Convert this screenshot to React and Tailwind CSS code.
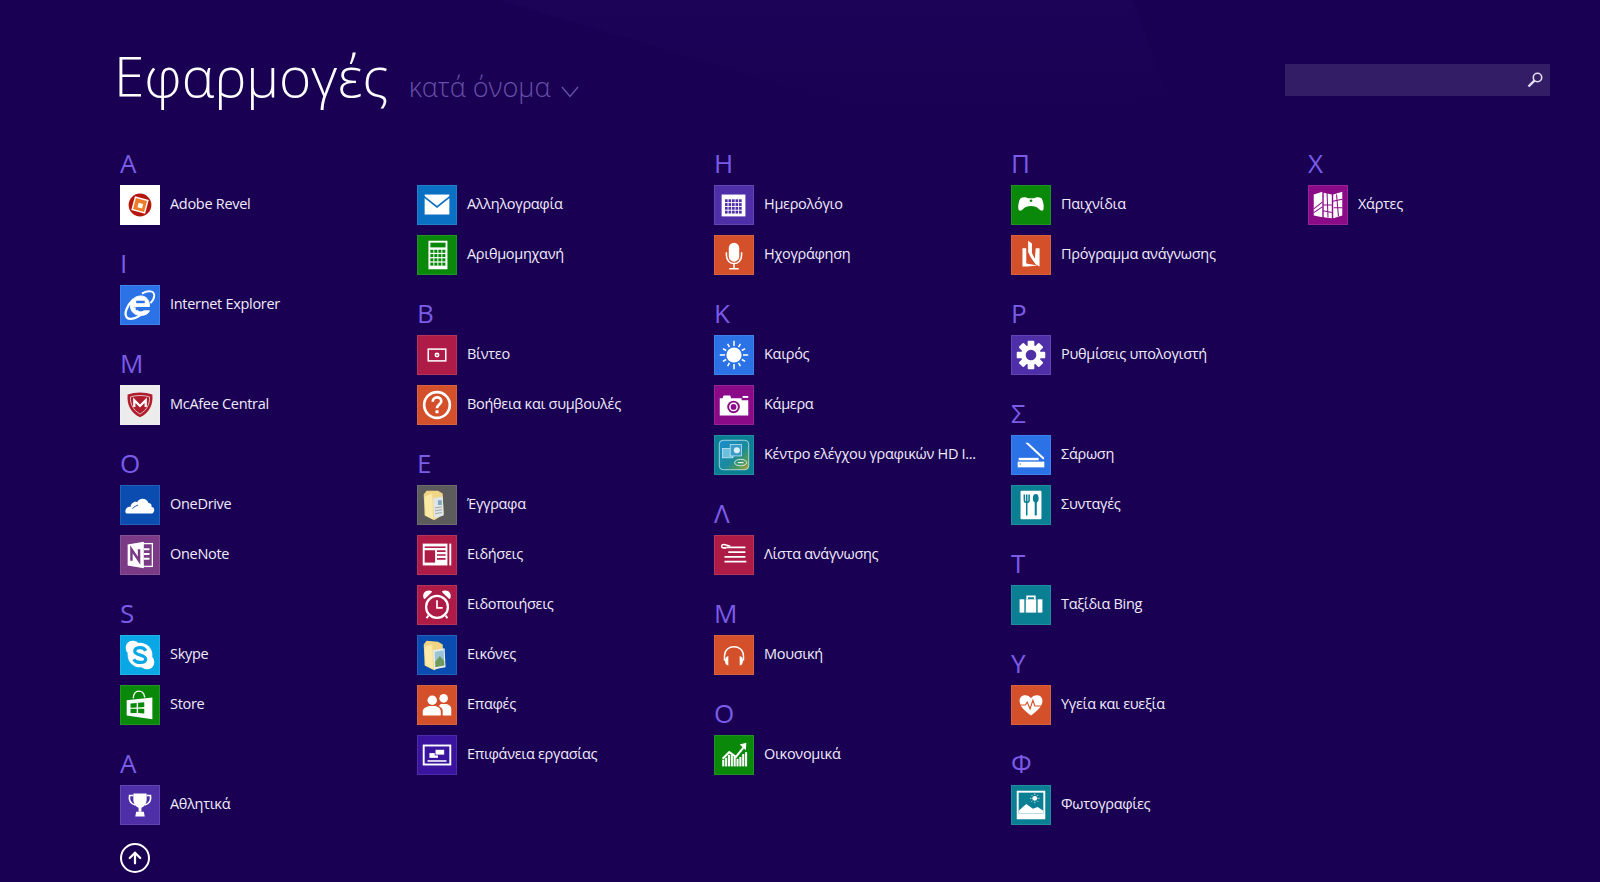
import React from "react";
import { ArrowUp } from "lucide-react";

const W = "#ffffff";

const Glyph = ({ children }) => (
  <svg viewBox="0 0 40 40" className="w-full h-full block">
    {children}
  </svg>
);

const financeTops = [25, 23, 20, 20, 22, 24, 22, 19, 17];

const icons = {
  revel: (
    <Glyph>
      <circle cx="20" cy="20" r="12" fill="#b5170c" />
      <rect x="12.5" y="12.5" width="15" height="15" fill="#fff" transform="rotate(15 20 20)" />
      <rect x="14" y="14" width="12" height="12" fill="#ee7b2a" transform="rotate(15 20 20)" />
      <rect x="18" y="18" width="5" height="5" fill="#fff" transform="rotate(15 20 20)" />
    </Glyph>
  ),
  ie: (
    <Glyph>
      <path d="M22 8 C29 4 35 5 35 10 C35 13 33 16 31 18" fill="none" stroke={W} strokeWidth="2" />
      <path d="M13 14 C6 21 3 29 6 33 C9 36 15 34 20 31" fill="none" stroke={W} strokeWidth="2.4" />
      <path d="M11.5 21.5 H30 C30 14 26 10.5 21 10.5 C14 10.5 10 15.5 10 21 C10 27 14.5 31 21 31 C25 31 28.5 29.5 30 26 H24 C22 28 17 28 16 23" fill={W} stroke={W} strokeWidth="1" />
      <rect x="16" y="15.5" width="9" height="2.6" fill="#2a72e6" />
      <rect x="15.5" y="23" width="15" height="2.4" fill="#2a72e6" />
    </Glyph>
  ),
  mcafee: (
    <Glyph>
      <path d="M7 9 C15 6 25 6 33 9 C34 20 30 28 20 33 C10 28 6 20 7 9 Z" fill="#b01e2e" />
      <path d="M10 11.5 C16 9.5 24 9.5 30 11.5 C30.5 19 27 25.5 20 29.5 C13 25.5 9.5 19 10 11.5 Z" fill="none" stroke="#ececec" strokeWidth="0.8" />
      <path d="M14 22 V15 L20 21 L26 15 V22" fill="none" stroke="#fff" strokeWidth="2.4" />
    </Glyph>
  ),
  onedrive: (
    <Glyph>
      <path d="M6 29 C3 28 5 21 10 22 C11 17 15 16 17 17 C19 12 27 12 29 18 C31 18 33 20 32 22 C35 22 36 25 34 28 C34 29 33 29 32 29 Z" fill={W} />
      <path d="M12 24 C14 21 17 21 18 20" fill="none" stroke="#0a4cb0" strokeWidth="1" />
    </Glyph>
  ),
  onenote: (
    <Glyph>
      <rect x="21" y="8" width="12" height="24" fill="none" stroke={W} strokeWidth="1.4" />
      <path d="M24 14 h6 M24 19 h6 M24 24 h6" stroke={W} strokeWidth="2" />
      <polygon points="7,9 24,6 24,34 7,31" fill={W} />
      <path d="M11 26 V14 L19 26 V14" fill="none" stroke="#7a3a86" strokeWidth="2.6" />
    </Glyph>
  ),
  skype: (
    <Glyph>
      <circle cx="20" cy="20" r="13" fill={W} />
      <rect x="5" y="5" width="15" height="15" rx="7" fill={W} />
      <rect x="20" y="20" width="15" height="15" rx="7" fill={W} />
      <path d="M26 15.5 C24 11 14.5 11 14.5 16 C14.5 21 26 19 26 24.5 C26 29 15.5 29 13.5 24.5" fill="none" stroke="#0aa7e6" strokeWidth="3.4" />
    </Glyph>
  ),
  store: (
    <Glyph>
      <path d="M13 13 C13 3 24 3 25 12" fill="none" stroke={W} strokeWidth="1.5" />
      <polygon points="6,15 33,12 33,35 6,31" fill={W} />
      <polygon points="10,18.5 16.5,18 16.5,22.5 10,23" fill="#0a880a" />
      <polygon points="18,17.5 24.5,17 24.5,22 18,22.5" fill="#0a880a" />
      <polygon points="10,24 16.5,24 16.5,28.5 10,28.5" fill="#0a880a" />
      <polygon points="18,24 24.5,24 24.5,29 18,28.5" fill="#0a880a" />
    </Glyph>
  ),
  trophy: (
    <Glyph>
      <path d="M13 8 H27 V14 C27 19 24 22 21.5 23 V27 H18.5 V23 C16 22 13 19 13 14 Z" fill={W} />
      <path d="M13 10 H9 C8 16 11 19 15 20 M27 10 H31 C32 16 29 19 25 20" fill="none" stroke={W} strokeWidth="1.7" />
      <polygon points="16,27 24,27 25,32 15,32" fill={W} />
    </Glyph>
  ),
  mail: (
    <Glyph>
      <rect x="7" y="9" width="26" height="21" fill={W} />
      <path d="M6 11 L20 22 L34 11" fill="none" stroke="#0a70c4" strokeWidth="1.8" />
    </Glyph>
  ),
  calc: (
    <Glyph>
      <rect x="11" y="5" width="20" height="30" fill={W} />
      <rect x="13" y="7" width="16" height="5" fill="#0a880a" />
      {[13, 17.2, 21.4, 25.6].flatMap((x) =>
        [14.5, 19, 23.5, 28].map((y) => <rect key={x + "-" + y} x={x} y={y} width="3.2" height="3.2" fill="#0a880a" />),
      )}
    </Glyph>
  ),
  video: (
    <Glyph>
      <rect x="10.8" y="13.8" width="18.4" height="12.4" fill="none" stroke={W} strokeWidth="1.6" />
      <circle cx="20" cy="20" r="2.6" fill={W} />
      <circle cx="20" cy="20" r="0.9" fill="#ad1b46" />
    </Glyph>
  ),
  help: (
    <Glyph>
      <circle cx="20" cy="20" r="13.5" fill="none" stroke={W} strokeWidth="2.8" />
      <path d="M15.5 16.5 C15.5 10.5 24.5 10.5 24.5 16 C24.5 19.5 20 19.5 20 23.5" fill="none" stroke={W} strokeWidth="2.8" />
      <rect x="18.4" y="25.5" width="3.2" height="3.2" fill={W} />
    </Glyph>
  ),
  docs: (
    <Glyph>
      <polygon points="6,9 9,5 21,5 26,8 27,30 17,36 7,31" fill="#f0d585" />
      <polygon points="7,11 15,8 16,35 8,31" fill="#fbe9a8" />
      <polygon points="16,13 26,11 27,31 17,34" fill="#dfe4e6" />
      <rect x="21" y="15" width="4" height="5" fill="#7fa8c0" />
      <path d="M18 23 L25 22 M18 26 L25 25 M18 29 L25 28" stroke="#98a4ac" strokeWidth="1" />
    </Glyph>
  ),
  news: (
    <Glyph>
      <rect x="5" y="8" width="26" height="23" fill={W} />
      <rect x="33" y="8" width="2" height="23" fill={W} />
      <rect x="7" y="11" width="22" height="1.6" fill="#ad1b46" />
      <rect x="7" y="15" width="11" height="13" fill="#ad1b46" />
      <path d="M20 16 h9 M20 20 h9 M20 24 h9" stroke="#ad1b46" strokeWidth="1.8" />
    </Glyph>
  ),
  alarm: (
    <Glyph>
      <circle cx="20" cy="22" r="11.5" fill="none" stroke={W} strokeWidth="2.4" />
      <path d="M20 15 V23 H26" fill="none" stroke={W} strokeWidth="1.8" />
      <path d="M6 13 C4 8 8 4 13 5 C15 5 15 6 14 7 L8 13 C7 14 6 14 6 13 Z" fill={W} />
      <path d="M34 13 C36 8 32 4 27 5 C25 5 25 6 26 7 L32 13 C33 14 34 14 34 13 Z" fill={W} />
      <path d="M11 31 L9 34 M29 31 L31 34" stroke={W} strokeWidth="2" />
    </Glyph>
  ),
  pictures: (
    <Glyph>
      <polygon points="6,9 9,5 21,6 26,9 27,31 17,36 7,31" fill="#f0d585" />
      <polygon points="7,11 15,9 16,35 8,31" fill="#fbe9a8" />
      <polygon points="16,15 28,13 29,33 17,35" fill="#e8eef0" />
      <polygon points="17.5,16.5 27,15 27.5,25 18,27" fill="#9cc4d8" />
      <polygon points="18,27 23,21 27.5,26 27.8,31 18.3,33" fill="#6f9a5c" />
    </Glyph>
  ),
  people: (
    <Glyph>
      <circle cx="15" cy="15" r="5" fill={W} />
      <path d="M5 31 V27 C5 23 9 22 12 21 H18 C21 22 24 23 24 27 V31 Z" fill={W} />
      <circle cx="27" cy="13" r="4.5" fill={W} />
      <path d="M26 31 V26 C26 24 24 22 22 21 L24 19 H30 C33 20 35 21 35 24 V31 Z" fill={W} />
    </Glyph>
  ),
  desktop: (
    <Glyph>
      <rect x="6" y="10" width="28" height="20" fill="none" stroke={W} strokeWidth="2" />
      <rect x="10" y="25.5" width="20" height="1.6" fill={W} />
      <rect x="12" y="18" width="9" height="5" fill={W} />
      <rect x="18" y="14" width="10" height="6" fill={W} stroke="#3a149e" strokeWidth="0.8" />
    </Glyph>
  ),
  calendar: (
    <Glyph>
      <rect x="7" y="9" width="25" height="23" fill={W} />
      {[10.5, 14.2, 17.9, 21.6, 25.3].flatMap((x) =>
        [14, 18, 22, 26].map((y) => <rect key={x + "-" + y} x={x} y={y} width="2.8" height="3" fill="#4f2fa8" />),
      )}
    </Glyph>
  ),
  mic: (
    <Glyph>
      <rect x="14.5" y="7" width="11" height="20" rx="5.5" fill={W} />
      <path d="M12 17 V20 C12 32 28 32 28 20 V17" fill="none" stroke={W} strokeWidth="1.6" />
      <path d="M20 29 V34 M15 34.5 H25" stroke={W} strokeWidth="1.6" />
    </Glyph>
  ),
  weather: (
    <Glyph>
      <circle cx="20" cy="20" r="8" fill={W} />
      {[0, 30, 60, 90, 120, 150, 180, 210, 240, 270, 300, 330].map((a) => (
        <rect key={a} x="19.2" y={a % 90 === 0 ? 5 : 6.5} width="1.6" height={a % 90 === 0 ? 5.5 : 4} fill={W} transform={`rotate(${a} 20 20)`} />
      ))}
    </Glyph>
  ),
  camera: (
    <Glyph>
      <path d="M5 31 V13 H8 L9 10 H16 L17 13 H28 V15 H35 V31 Z" fill={W} />
      <rect x="29" y="10.5" width="6" height="2" fill={W} />
      <circle cx="19.5" cy="22" r="6.6" fill="#8a0a88" />
      <circle cx="19.5" cy="22" r="4.6" fill={W} />
      <circle cx="19.5" cy="22" r="3" fill="#8a0a88" />
    </Glyph>
  ),
  intel: (
    <Glyph>
      <defs>
        <linearGradient id="intelFill" x1="0" y1="0" x2="1" y2="1">
          <stop offset="0" stopColor="#1c8fd0" />
          <stop offset="0.55" stopColor="#1a8a9c" />
          <stop offset="0.8" stopColor="#4f9a5a" />
          <stop offset="1" stopColor="#c8a030" />
        </linearGradient>
      </defs>
      <rect x="4.5" y="4.5" width="31" height="31" rx="4" fill="url(#intelFill)" stroke="#cfe8ee" strokeWidth="0.8" />
      <rect x="8" y="13" width="11" height="10" fill="#6cc0dc" stroke="#d8f0f6" strokeWidth="0.7" />
      <rect x="16" y="9" width="12" height="12" fill="#3a9cc8" stroke="#d8f0f6" strokeWidth="0.7" />
      <circle cx="23" cy="15" r="3.2" fill="#d8f0f6" />
      <ellipse cx="27" cy="28" rx="6.4" ry="3.4" fill="none" stroke="#e8f6fa" strokeWidth="0.9" />
      <path d="M24 28 H30" stroke="#e8f6fa" strokeWidth="1.2" />
    </Glyph>
  ),
  readlist: (
    <Glyph>
      <path d="M12 12 H32 M14 17 H32 M10 22 H32 M10 27 H33" stroke={W} strokeWidth="2" />
      <path d="M12 12.5 H8.5 C6.5 12.5 6.5 9 9 9 C11 9 13 10 16 10.5" fill="none" stroke={W} strokeWidth="1.6" />
    </Glyph>
  ),
  music: (
    <Glyph>
      <path d="M10 26 V21 C10 8 30 8 30 21 V26" fill="none" stroke={W} strokeWidth="1.5" />
      <path d="M14 21 C11.5 21.5 10.5 24 10.5 26 C10.5 28 11.5 31 14 31 Z" fill={W} />
      <path d="M26 21 C28.5 21.5 29.5 24 29.5 26 C29.5 28 28.5 31 26 31 Z" fill={W} />
    </Glyph>
  ),
  finance: (
    <Glyph>
      <path d="M8 24 L15 17 L22 22 L31 11" fill="none" stroke={W} strokeWidth="2.2" />
      <polygon points="26,9 33,7 32.5,15" fill={W} />
      {[8, 11, 14, 17, 20, 23, 26, 29, 32].map((x, i) => (
        <rect key={x} x={x - 0.4} y={financeTops[i]} width="2.2" height={32 - financeTops[i]} fill={W} />
      ))}
    </Glyph>
  ),
  games: (
    <Glyph>
      <path d="M9 13 C12 11 15 12 17 13 H23 C25 12 28 11 31 13 C33 16 34 22 33 25 C32 27 30 26 28 24 C26 22 24 21 20 21 C16 21 14 22 12 24 C10 26 8 27 7 25 C6 22 7 16 9 13 Z" fill={W} />
      <circle cx="20" cy="15.5" r="1.4" fill="#0a880a" />
    </Glyph>
  ),
  reader: (
    <Glyph>
      <polygon points="11,13 15,13 15,29 27,31 16,32 11,32" fill={W} />
      <polygon points="17,5 21,8 21,18 24,24 25,13 29,13 29,32 25,30 20,23 17,17" fill={W} />
    </Glyph>
  ),
  settings: (
    <Glyph>
      {[0, 45, 90, 135].map((a) => (
        <rect key={a} x="16.5" y="5" width="7" height="30" rx="1" fill={W} transform={`rotate(${a} 20 20)`} />
      ))}
      <circle cx="20" cy="20" r="10.5" fill={W} />
      <circle cx="20" cy="20" r="5.6" fill="#4f2fa8" />
    </Glyph>
  ),
  scan: (
    <Glyph>
      <polygon points="14,7 17,7 34,23 33,25" fill={W} />
      <rect x="7" y="23" width="21" height="2.6" fill={W} />
      <polygon points="6,27 34,27 34,33 6,33" fill={W} />
      <rect x="8" y="29" width="1.5" height="1" fill="#2a72e6" />
    </Glyph>
  ),
  recipes: (
    <Glyph>
      <rect x="9" y="5" width="22" height="30" rx="1" fill={W} />
      <path d="M13 9 V15 C13 18 18 18 18 15 V9 M15.5 9 V31" fill="none" stroke="#0a7f94" strokeWidth="1.6" />
      <ellipse cx="25" cy="13" rx="3" ry="4.6" fill="#0a7f94" />
      <path d="M25 14 V31" stroke="#0a7f94" strokeWidth="2.2" />
    </Glyph>
  ),
  travel: (
    <Glyph>
      <rect x="8" y="14" width="5" height="14" fill={W} />
      <rect x="27" y="14" width="5" height="14" fill={W} />
      <rect x="14.5" y="14" width="11" height="14" fill={W} />
      <path d="M16 14 V11 H24 V14" fill="none" stroke={W} strokeWidth="1.8" />
    </Glyph>
  ),
  health: (
    <Glyph>
      <path d="M20 31 C12 25 8 21 8 15.5 C8 8.5 17 8 20 13 C23 8 32 8.5 32 15.5 C32 21 28 25 20 31 Z" fill={W} />
      <path d="M8 20 H14 L16 17 L19 24 L22 15 L24 21 H33" fill="none" stroke="#d4502a" strokeWidth="1.2" />
    </Glyph>
  ),
  photos: (
    <Glyph>
      <rect x="5" y="5" width="30" height="30" fill={W} />
      <rect x="7" y="7" width="26" height="22" fill="#0a7f94" />
      <circle cx="24" cy="13" r="2.6" fill={W} />
      <path d="M24 8 V9.5 M24 16.5 V18 M19 13 H20.5 M27.5 13 H29 M20.5 9.5 L21.5 10.5 M27.5 9.5 L26.5 10.5 M20.5 16.5 L21.5 15.5 M27.5 16.5 L26.5 15.5" stroke={W} strokeWidth="0.8" />
      <path d="M7 29 V26 L15 19 L22 24 L27 22 L33 26 V29 Z" fill={W} />
    </Glyph>
  ),
  maps: (
    <Glyph>
      <polygon points="5,9 14,6 14,33 5,31" fill={W} />
      <polygon points="15.5,7 24,9 24,34 15.5,33" fill={W} />
      <polygon points="25.5,9 35,6 35,31 25.5,34" fill={W} />
      <path d="M5 24 L14 17 M5 28 L14 22 M15 20 H24 M15 26 L24 28 M25 16 L35 14 M26 23 H35 M29 9 L31 32 M19 7 L20 33" stroke="#8a0a88" strokeWidth="1.1" />
    </Glyph>
  ),
};

const columns = [
  [
    { letter: "A" },
    { name: "Adobe Revel", icon: "revel", tile: "bg-[#ffffff]" },
    { letter: "I" },
    { name: "Internet Explorer", icon: "ie", tile: "bg-[#2a72e6]" },
    { letter: "M" },
    { name: "McAfee Central", icon: "mcafee", tile: "bg-[#ececec]" },
    { letter: "O" },
    { name: "OneDrive", icon: "onedrive", tile: "bg-[#0a4cb0]" },
    { name: "OneNote", icon: "onenote", tile: "bg-[#7a3a86]" },
    { letter: "S" },
    { name: "Skype", icon: "skype", tile: "bg-[#0aa7e6]" },
    { name: "Store", icon: "store", tile: "bg-[#0a880a]" },
    { letter: "Α" },
    { name: "Αθλητικά", icon: "trophy", tile: "bg-[#4f2fa8]" },
  ],
  [
    { letter: "" },
    { name: "Αλληλογραφία", icon: "mail", tile: "bg-[#0a70c4]" },
    { name: "Αριθμομηχανή", icon: "calc", tile: "bg-[#0a880a]" },
    { letter: "Β" },
    { name: "Βίντεο", icon: "video", tile: "bg-[#ad1b46]" },
    { name: "Βοήθεια και συμβουλές", icon: "help", tile: "bg-[#d4502a]" },
    { letter: "Ε" },
    { name: "Έγγραφα", icon: "docs", tile: "bg-[#5c5c5c]" },
    { name: "Ειδήσεις", icon: "news", tile: "bg-[#ad1b46]" },
    { name: "Ειδοποιήσεις", icon: "alarm", tile: "bg-[#ad1b46]" },
    { name: "Εικόνες", icon: "pictures", tile: "bg-[#0a4cb0]" },
    { name: "Επαφές", icon: "people", tile: "bg-[#d4502a]" },
    { name: "Επιφάνεια εργασίας", icon: "desktop", tile: "bg-[#3a149e]" },
  ],
  [
    { letter: "Η" },
    { name: "Ημερολόγιο", icon: "calendar", tile: "bg-[#4f2fa8]" },
    { name: "Ηχογράφηση", icon: "mic", tile: "bg-[#d4502a]" },
    { letter: "Κ" },
    { name: "Καιρός", icon: "weather", tile: "bg-[#2a72e6]" },
    { name: "Κάμερα", icon: "camera", tile: "bg-[#8a0a88]" },
    { name: "Κέντρο ελέγχου γραφικών HD I...", icon: "intel", tile: "bg-[#0a7f94]" },
    { letter: "Λ" },
    { name: "Λίστα ανάγνωσης", icon: "readlist", tile: "bg-[#ad1b46]" },
    { letter: "Μ" },
    { name: "Μουσική", icon: "music", tile: "bg-[#d4502a]" },
    { letter: "Ο" },
    { name: "Οικονομικά", icon: "finance", tile: "bg-[#0a880a]" },
  ],
  [
    { letter: "Π" },
    { name: "Παιχνίδια", icon: "games", tile: "bg-[#0a880a]" },
    { name: "Πρόγραμμα ανάγνωσης", icon: "reader", tile: "bg-[#d4502a]" },
    { letter: "Ρ" },
    { name: "Ρυθμίσεις υπολογιστή", icon: "settings", tile: "bg-[#4f2fa8]" },
    { letter: "Σ" },
    { name: "Σάρωση", icon: "scan", tile: "bg-[#2a72e6]" },
    { name: "Συνταγές", icon: "recipes", tile: "bg-[#0a7f94]" },
    { letter: "Τ" },
    { name: "Ταξίδια Bing", icon: "travel", tile: "bg-[#0a7f94]" },
    { letter: "Υ" },
    { name: "Υγεία και ευεξία", icon: "health", tile: "bg-[#d4502a]" },
    { letter: "Φ" },
    { name: "Φωτογραφίες", icon: "photos", tile: "bg-[#0a7f94]" },
  ],
  [
    { letter: "Χ" },
    { name: "Χάρτες", icon: "maps", tile: "bg-[#8a0a88]" },
  ],
];

function AppRow({ name, icon, tile }) {
  return (
    <div className="h-[50px] flex items-start gap-[10px]">
      <div className={`w-10 h-10 shrink-0 border border-white/10 ${tile}`}>{icons[icon]}</div>
      <span className="h-10 pb-[2px] flex items-center text-[14.5px] tracking-[-0.3px] text-[#f0ebfa] whitespace-nowrap">{name}</span>
    </div>
  );
}

function LetterRow({ letter }) {
  return (
    <div className="h-[50px] flex items-end pb-[5px] text-[26px] leading-[34px] text-[#7a5ce6]">{letter}</div>
  );
}

export default function App() {
  return (
    <div className="relative h-screen overflow-hidden bg-[#190052] font-['Open_Sans',sans-serif]">
      {/* faint wallpaper shape behind the header */}
      <svg className="absolute top-0 left-0 w-[1200px] h-[120px]" viewBox="0 0 1200 120">
        <defs>
          <linearGradient id="wall" x1="0" y1="0" x2="0" y2="1">
            <stop offset="0" stopColor="#2a0f6a" stopOpacity="0.2" />
            <stop offset="1" stopColor="#2a0f6a" stopOpacity="0" />
          </linearGradient>
        </defs>
        <polygon points="500,0 1132,0 1170,100 900,120 700,60" fill="url(#wall)" />
      </svg>

      <div className="relative h-[135px] pl-[114px] pr-[50px] flex justify-between">
        <div className="flex items-baseline h-min pt-[38px] gap-[20px]">
          <h1 className="text-[55px] leading-[76px] font-light text-white">Εφαρμογές</h1>
          <div className="flex items-center gap-[11px] text-[27px] font-light text-[#6650a8]">
            <span>κατά όνομα</span>
            <svg viewBox="0 0 18 12" className="w-[18px] h-[12px] mt-[10px]">
              <path d="M1 1 L9 10.5 L17 1" fill="none" stroke="currentColor" strokeWidth="1.4" />
            </svg>
          </div>
        </div>
        <div className="mt-[64px] w-[265px] h-8 bg-[#331d66] flex items-center justify-end pr-[7px]">
          <svg viewBox="0 0 16 16" className="w-4 h-4">
            <circle cx="10.5" cy="5.5" r="4.2" fill="none" stroke="#e4def2" strokeWidth="1.6" />
            <path d="M7.4 8.6 L1.5 14.5" stroke="#e4def2" strokeWidth="2.4" />
          </svg>
        </div>
      </div>

      <div className="relative flex pl-[120px]">
        {columns.map((col, i) => (
          <div key={i} className="w-[297px] shrink-0 flex flex-col">
            {col.map((row, j) =>
              row.icon ? <AppRow key={j} {...row} /> : <LetterRow key={j} letter={row.letter} />,
            )}
          </div>
        ))}
      </div>

      <div className="absolute left-[120px] top-[843px] w-[30px] h-[30px] rounded-full border-2 border-white flex items-center justify-center">
        <ArrowUp className="w-[18px] h-[18px] text-white" strokeWidth={3} />
      </div>
    </div>
  );
}
